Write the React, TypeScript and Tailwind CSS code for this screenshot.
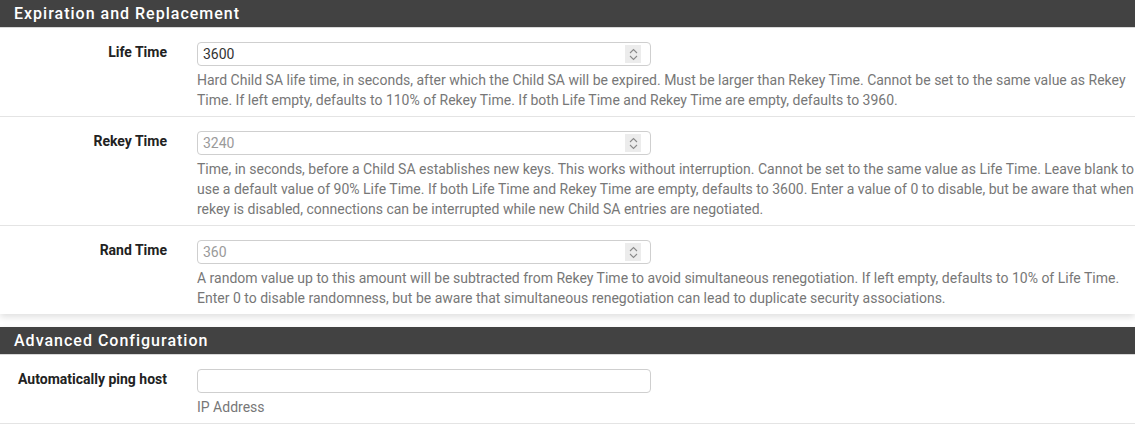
import type { ReactNode } from 'react';

function Spinner() {
  return (
    <span className="absolute right-[9px] top-1/2 -translate-y-1/2 flex flex-col items-center justify-center w-[16px] h-[18px] bg-[#ececec]">
      <svg width="9" height="6" viewBox="0 0 9 6" className="mb-[1px]">
        <path d="M1 5 L4.5 1.5 L8 5" fill="none" stroke="#8a8a8a" strokeWidth="1.1" />
      </svg>
      <svg width="9" height="6" viewBox="0 0 9 6">
        <path d="M1 1 L4.5 4.5 L8 1" fill="none" stroke="#8a8a8a" strokeWidth="1.1" />
      </svg>
    </span>
  );
}

function Input({ value, placeholder, spinner }: { value?: string; placeholder?: string; spinner?: boolean }) {
  return (
    <div className="relative w-[454px] h-[24px] border border-[#cfcfcf] rounded-[4px] bg-white flex items-center px-[5px] text-[14px]">
      {value ? (
        <span className="text-[#333]">{value}</span>
      ) : (
        <span className="text-[#9a9a9a]">{placeholder}</span>
      )}
      {spinner && <Spinner />}
    </div>
  );
}

function Row({ label, children, help, last }: { label: string; children: ReactNode; help: string; last?: boolean }) {
  return (
    <div className={`flex pt-[14px] pb-[6px] ${last ? '' : 'border-b border-[#e4e4e4]'}`}>
      <div className="w-[167px] shrink-0 text-right text-[14px] font-bold text-[#222] leading-[23px] -mt-[1px]">
        {label}
      </div>
      <div className="flex-1 pl-[30px]">
        {children}
        <p className="mt-[4px] text-[14px] leading-[20px] text-[#777]">{help}</p>
      </div>
    </div>
  );
}

function Panel({ title, children }: { title: string; children: ReactNode }) {
  return (
    <div className="bg-white shadow-[0_3px_7px_rgba(0,0,0,0.13)] mb-[13px]">
      <div className="h-[28px] bg-[#424242] border-b border-[#d8d8d8] px-[14px] flex items-center">
        <h2 className="text-white text-[16px] font-medium tracking-[1px]">{title}</h2>
      </div>
      <div>{children}</div>
    </div>
  );
}

export default function App() {
  return (
    <div className="bg-white min-h-[424px] font-['Roboto',sans-serif] overflow-hidden">
      <Panel title="Expiration and Replacement">
        <Row
          label="Life Time"
          help="Hard Child SA life time, in seconds, after which the Child SA will be expired. Must be larger than Rekey Time. Cannot be set to the same value as Rekey Time. If left empty, defaults to 110% of Rekey Time. If both Life Time and Rekey Time are empty, defaults to 3960."
        >
          <Input value="3600" spinner />
        </Row>
        <Row
          label="Rekey Time"
          help="Time, in seconds, before a Child SA establishes new keys. This works without interruption. Cannot be set to the same value as Life Time. Leave blank to use a default value of 90% Life Time. If both Life Time and Rekey Time are empty, defaults to 3600. Enter a value of 0 to disable, but be aware that when rekey is disabled, connections can be interrupted while new Child SA entries are negotiated."
        >
          <Input placeholder="3240" spinner />
        </Row>
        <Row
          label="Rand Time"
          last
          help="A random value up to this amount will be subtracted from Rekey Time to avoid simultaneous renegotiation. If left empty, defaults to 10% of Life Time. Enter 0 to disable randomness, but be aware that simultaneous renegotiation can lead to duplicate security associations."
        >
          <Input placeholder="360" spinner />
        </Row>
      </Panel>
      <Panel title="Advanced Configuration">
        <Row label="Automatically ping host" help="IP Address">
          <Input />
        </Row>
      </Panel>
    </div>
  );
}
